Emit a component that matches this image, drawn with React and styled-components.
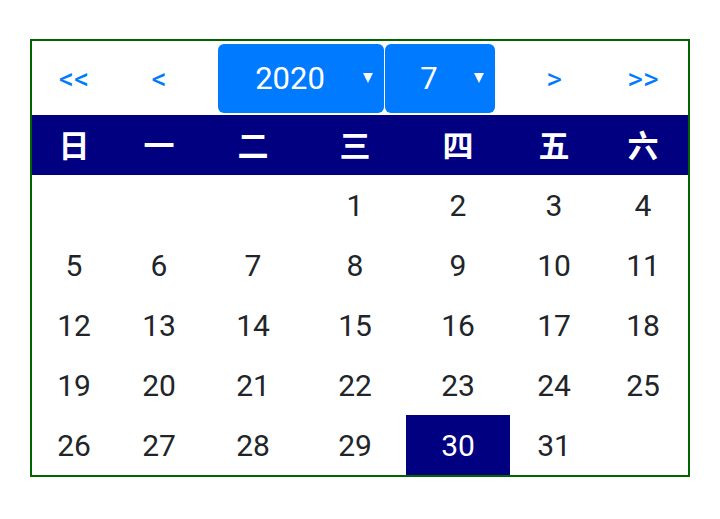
import React from "react";
import styled, { createGlobalStyle } from "styled-components";

const GlobalStyle = createGlobalStyle`
  html, body { margin: 0; padding: 0; background: #fff; }
  body { font-family: Roboto, "Noto Sans", sans-serif; }
`;

const Page = styled.div`
  padding: 39px 0 0 30px;
`;

const Calendar = styled.div`
  width: 656px;
  border: 2px solid #006400;
  display: grid;
  grid-template-columns: 84px 86px 102px 102px 104px 88px 90px;
  grid-template-rows: 74px;
  grid-auto-rows: 60px;
`;

const NavCell = styled.div`
  display: flex;
  align-items: center;
  justify-content: center;
  color: #007bff;
  font-size: 30px;
  cursor: pointer;
`;

const SelectCell = styled.div`
  grid-column: span 3;
  display: flex;
  align-items: center;
  justify-content: center;
  gap: 1px;
`;

const Select = styled.div`
  width: ${(p) => p.$w}px;
  height: 69px;
  box-sizing: border-box;
  background: #007bff;
  border-radius: 6px;
  color: #fff;
  font-size: 31px;
  display: flex;
  align-items: center;
  padding-right: 11px;
`;

const SelectValue = styled.span`
  flex: 1;
  text-align: center;
`;

const Caret = styled.span`
  width: 0;
  height: 0;
  border-left: 5.5px solid transparent;
  border-right: 5.5px solid transparent;
  border-top: 10px solid #fff;
`;

const WeekDay = styled.div`
  background: #000080;
  color: #fff;
  font-family: "Noto Sans CJK SC", sans-serif;
  font-weight: 700;
  font-size: 31px;
  display: flex;
  align-items: center;
  justify-content: center;
  padding-bottom: 4px;
  box-sizing: border-box;
`;

const Day = styled.div`
  display: flex;
  align-items: center;
  justify-content: center;
  font-size: 30px;
  color: ${(p) => (p.$selected ? "#fff" : "#212529")};
  background: ${(p) => (p.$selected ? "#000080" : "transparent")};
`;

const weekDays = ["日", "一", "二", "三", "四", "五", "六"];

export default function App() {
  const first = 3;
  const cells = [];
  for (let i = 0; i < first; i++) cells.push(null);
  for (let d = 1; d <= 31; d++) cells.push(d);
  while (cells.length % 7) cells.push(null);

  return (
    <Page>
      <GlobalStyle />
      <Calendar>
        <NavCell>&lt;&lt;</NavCell>
        <NavCell>&lt;</NavCell>
        <SelectCell>
          <Select $w={166}>
            <SelectValue>2020</SelectValue>
            <Caret />
          </Select>
          <Select $w={110}>
            <SelectValue>7</SelectValue>
            <Caret />
          </Select>
        </SelectCell>
        <NavCell>&gt;</NavCell>
        <NavCell>&gt;&gt;</NavCell>
        {weekDays.map((w) => (
          <WeekDay key={w}>{w}</WeekDay>
        ))}
        {cells.map((d, i) => (
          <Day key={i} $selected={d === 30}>
            {d ?? ""}
          </Day>
        ))}
      </Calendar>
    </Page>
  );
}
